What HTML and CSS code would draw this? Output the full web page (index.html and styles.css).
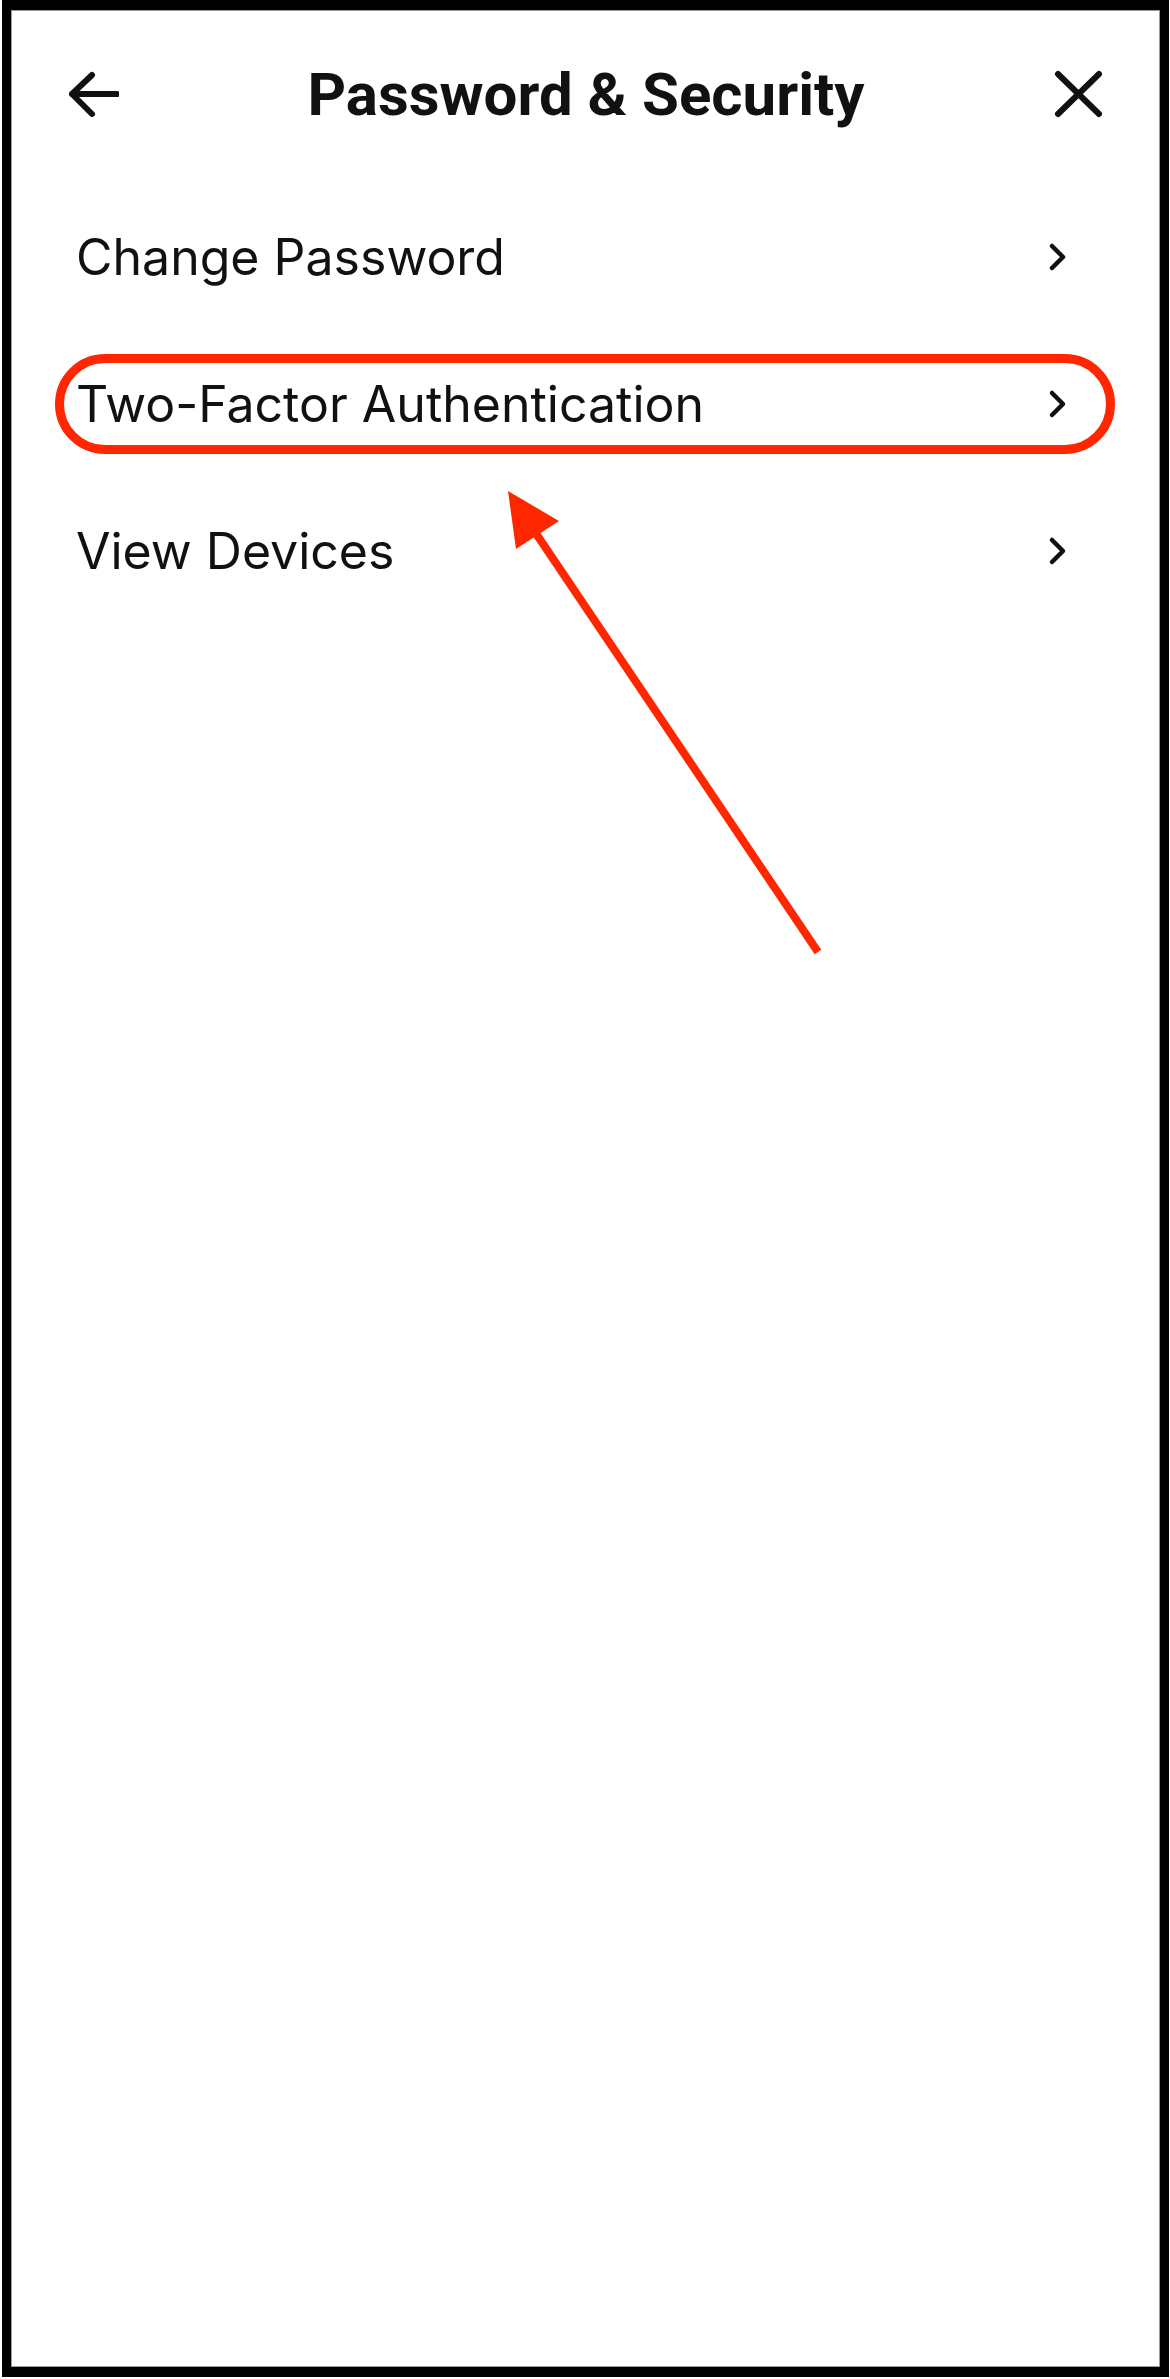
FILE: index.html
```html
<!DOCTYPE html>
<html lang="en">
<head>
    <meta charset="UTF-8">
    <meta name="viewport" content="width=device-width, initial-scale=1.0">
    <title>Password &amp; Security</title>
    <link rel="stylesheet" href="styles.css">
</head>
<body>
    <div class="screen">
        <header class="topbar">
            <button class="icon-btn" aria-label="Back">
                <svg width="50" height="50" viewBox="0 0 50 50">
                    <path d="M23 6 L3 25 L23 45 M3 25 H48" fill="none" stroke="#111" stroke-width="6" stroke-linecap="round" stroke-linejoin="round"/>
                </svg>
            </button>
            <h1>Password &amp; Security</h1>
            <button class="icon-btn" aria-label="Close">
                <svg width="50" height="50" viewBox="0 0 50 50">
                    <path d="M5 5 L46 45 M46 5 L5 45" fill="none" stroke="#111" stroke-width="6" stroke-linecap="round"/>
                </svg>
            </button>
        </header>

        <ul class="menu">
            <li class="menu-item">
                <span>Change Password</span>
                <svg class="chevron" width="20" height="32" viewBox="0 0 20 32"><path d="M4 5 L15 16 L4 27"/></svg>
            </li>
            <li class="menu-item highlighted">
                <span>Two-Factor Authentication</span>
                <svg class="chevron" width="20" height="32" viewBox="0 0 20 32"><path d="M4 5 L15 16 L4 27"/></svg>
            </li>
            <li class="menu-item">
                <span>View Devices</span>
                <svg class="chevron" width="20" height="32" viewBox="0 0 20 32"><path d="M4 5 L15 16 L4 27"/></svg>
            </li>
        </ul>

        <!-- pointer to the highlighted row -->
        <svg class="pointer" width="330" height="480" viewBox="0 0 330 480">
            <line x1="319" y1="472" x2="36" y2="52" stroke="#ff2600" stroke-width="8"/>
            <polygon points="9,11 60,41 17,69" fill="#ff2600"/>
        </svg>
    </div>
</body>
</html>
```

FILE: styles.css
```css
body {
    margin: 0;
    background: #fff;
    font-family: Inter, "Noto Sans", sans-serif;
    color: #111;
}
.screen {
    position: relative;
    box-sizing: border-box;
    width: 1167px;
    height: 2377px;
    margin: 0 1px 2px 2px;
    border-style: solid;
    border-color: #000;
    border-width: 10px 9px 10px 9px;
    box-shadow: inset 0 0 0 1px #9a9a9a;
    background: #fff;
}
.topbar {
    height: 168px;
    display: flex;
    align-items: center;
    justify-content: space-between;
    padding: 0 57px 0 58px;
}
.topbar h1 {
    margin: 0;
    font-family: Roboto, "Liberation Sans", sans-serif;
    font-weight: 700;
    font-size: 60px;
    color: #111;
}
.icon-btn {
    border: none;
    background: none;
    padding: 0;
    display: flex;
    cursor: pointer;
}
.menu {
    list-style: none;
    margin: 0;
    padding: 29px 45px 0 44px;
    display: flex;
    flex-direction: column;
    gap: 47px;
}
.menu-item {
    box-sizing: border-box;
    height: 100px;
    display: flex;
    align-items: center;
    justify-content: space-between;
    padding: 0 38px 0 12px;
    border: 9px solid transparent;
    border-radius: 50px;
    font-size: 50px;
    cursor: pointer;
}
.menu-item.highlighted {
    border-color: #ff2600;
}
.chevron path {
    fill: none;
    stroke: #111;
    stroke-width: 4.5;
    stroke-linecap: round;
    stroke-linejoin: round;
}
.pointer {
    position: absolute;
    left: 488px;
    top: 470px;
}
```
